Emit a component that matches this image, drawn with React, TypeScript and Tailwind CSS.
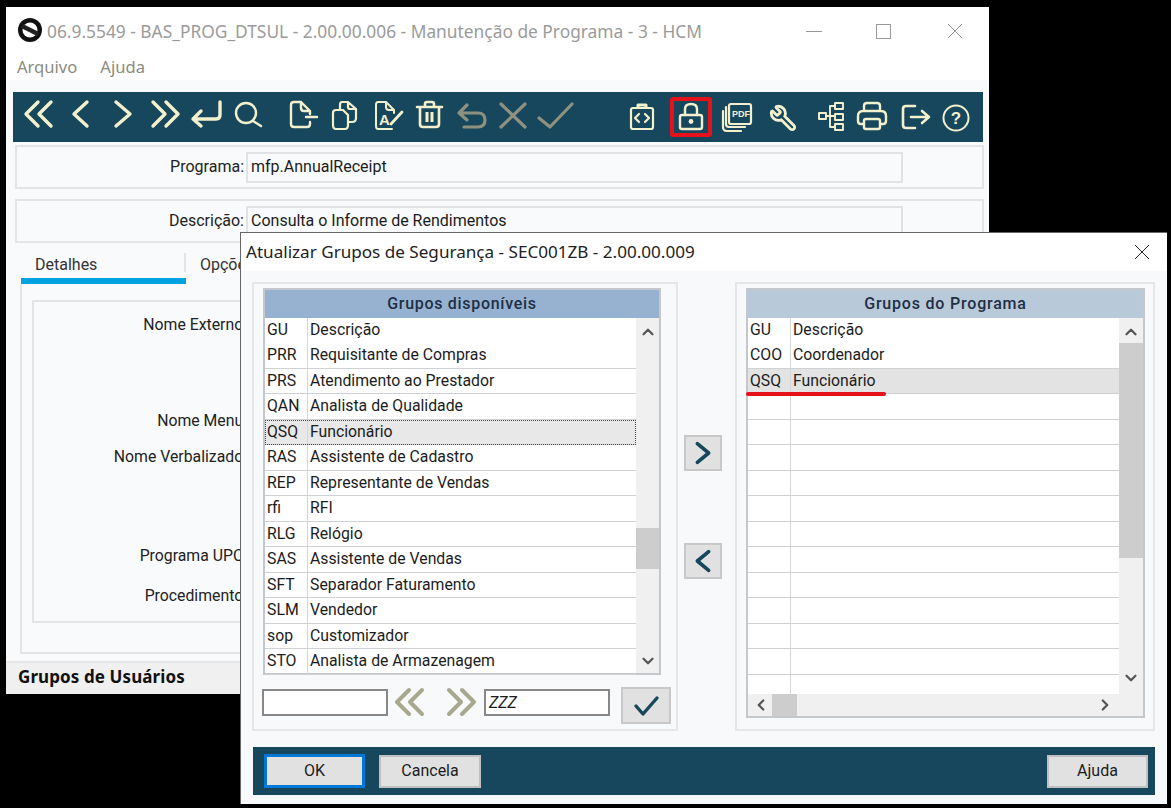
import { ChevronDown, ChevronLeft, ChevronRight, ChevronUp, Wrench } from "lucide-react";
import type { ReactNode } from "react";

const s = { fill: "none", stroke: "currentColor", strokeLinecap: "round", strokeLinejoin: "round" } as const;

function Ico({ w = 2.6, children }: { w?: number; children: ReactNode }) {
  return (
    <svg viewBox="0 0 36 36" width="36" height="36" {...s} strokeWidth={w} className="overflow-visible">
      {children}
    </svg>
  );
}

const tools = [
  { ml: "ml-0", c: "text-[#f3f0cd]", i: <Ico w={3.4}><path d="M17 5L5 17L17 29M30 5L18 17L30 29" /></Ico> },
  { ml: "ml-[6px]", c: "text-[#f3f0cd]", i: <Ico w={3.4}><path d="M24 5L11 17L24 29" /></Ico> },
  { ml: "ml-[5px]", c: "text-[#f3f0cd]", i: <Ico w={3.4}><path d="M12 5L26 17L12 29" /></Ico> },
  { ml: "ml-[7px]", c: "text-[#f3f0cd]", i: <Ico w={3.4}><path d="M6 5L18 17L6 29M19 5L31 17L19 29" /></Ico> },
  { ml: "ml-[5px]", c: "text-[#f3f0cd]", i: <Ico w={3.4}><path d="M32 5V18Q32 22 28 22H5M13 14L5 22L13 29" /></Ico> },
  { ml: "ml-[7px]", c: "text-[#f3f0cd]", i: <Ico w={2.4}><circle cx="15" cy="16" r="10" /><path d="M22 24L30 29" /></Ico> },
  { ml: "ml-[17px]", c: "text-[#f3f0cd]", i: <Ico w={2.4}><path d="M17 5H10Q7 5 7 8V27Q7 30 10 30H23Q26 30 26 27V25M17 5L26 14V17M17 5V11Q17 14 20 14H26M22 20H33" /></Ico> },
  { ml: "ml-[6px]", c: "text-[#f3f0cd]", i: <Ico w={2.2}><path d="M22 5H16Q14 5 14 8V13H10Q7 13 7 16V28Q7 32 10 32H19Q22 32 22 28V25H26Q30 25 30 21V12ZM22 5V10Q22 12 24 12H30M14 13H17L22 18V25" /></Ico> },
  { ml: "ml-[8px]", c: "text-[#f3f0cd]", i: <Ico w={2}><path d="M16 5H8Q6 5 6 8V29Q6 32 8 32H22M16 5L24 13V16M16 5V10Q16 13 19 13H24" /><path d="M21 27L32 15" strokeWidth={2.8} /><text x="9" y="28" fontSize="15" fontWeight="700" fontFamily="Liberation Sans" fill="currentColor" stroke="none">A</text></Ico> },
  { ml: "ml-[5px]", c: "text-[#f3f0cd]", i: <Ico w={2.6}><path d="M6 10H31M14 10V7Q14 5 16 5H21Q23 5 23 7V10M9 10V27Q9 30 12 30H25Q28 30 28 27V10" /><path d="M16 15V25M21 15V25" strokeWidth={3} strokeLinecap="butt" /></Ico> },
  { ml: "ml-[7px]", c: "text-[#8f917f]", i: <Ico w={3.2}><path d="M13 8L5 16L13 23M5 16H24Q31 16 31 23Q31 30 24 30H10" /></Ico> },
  { ml: "ml-[5px]", c: "text-[#8f917f]", i: <Ico w={3.2}><path d="M6 7L30 30M30 7L6 30" /></Ico> },
  { ml: "ml-[6px]", c: "text-[#8f917f]", i: <Ico w={3.2}><path d="M2 21L13 30L35 7" /></Ico> },
  { ml: "ml-[51px]", c: "text-[#f3f0cd]", i: <Ico w={2.2}><rect x="7" y="11" width="22" height="21" rx="2" /><path d="M14 10V8H22V10" strokeWidth={3} /><path d="M15 17L11 21L15 25M21 17L25 21L21 25" /></Ico> },
  { ml: "ml-[13px]", c: "text-[#f3f0cd]", red: true, i: <Ico w={2.4}><rect x="7" y="18" width="22" height="14" rx="2" /><path d="M12 18V12Q12 7 18 7Q24 7 24 12V18" /><circle cx="18" cy="24.5" r="2.4" fill="currentColor" stroke="none" /></Ico> },
  { ml: "ml-[10px]", c: "text-[#f3f0cd]", i: <Ico w={2.2}><rect x="10" y="7" width="22" height="20" rx="2" /><path d="M7 10V27Q7 30 10 30H26M4 14V30Q4 34 8 34H22" /><text x="13" y="20" fontSize="9" fontWeight="700" fontFamily="Liberation Sans" fill="currentColor" stroke="none">PDF</text></Ico> },
  { ml: "ml-[10px]", c: "text-[#f3f0cd]", i: <div className="w-[36px] h-[36px] flex items-center justify-center pt-[6px] -scale-x-100"><Wrench size={28} strokeWidth={2.4} /></div> },
  { ml: "ml-[11px]", c: "text-[#f3f0cd]", i: <Ico w={1.9}><rect x="7" y="16" width="7" height="6" /><rect x="23" y="6" width="8" height="6" /><rect x="23" y="17" width="8" height="6" /><rect x="23" y="27" width="8" height="6" /><path d="M14 19H23M18 9V30M18 9H23M18 30H23" /></Ico> },
  { ml: "ml-[6px]", c: "text-[#f3f0cd]", i: <Ico w={2.4}><path d="M10 14V9Q10 6 13 6H23Q26 6 26 9V14M10 27H7Q4 27 4 24V19Q4 14 9 14H27Q32 14 32 19V24Q32 27 29 27H26" /><rect x="10" y="22" width="16" height="10" rx="2" /></Ico> },
  { ml: "ml-[7px]", c: "text-[#f3f0cd]", i: <Ico w={2.6}><path d="M18 9H9Q6 9 6 12V28Q6 31 9 31H18M14 20H31M25 14L32 20L25 26" /></Ico> },
  { ml: "ml-[5px]", c: "text-[#f3f0cd]", i: <Ico w={2}><circle cx="18" cy="21" r="12.5" /><text x="18" y="27" fontSize="17" fontWeight="700" textAnchor="middle" fontFamily="Liberation Sans" fill="currentColor" stroke="none">?</text></Ico> },
];

const available = [
  ["GU", "Descrição"],
  ["PRR", "Requisitante de Compras"],
  ["PRS", "Atendimento ao Prestador"],
  ["QAN", "Analista de Qualidade"],
  ["QSQ", "Funcionário"],
  ["RAS", "Assistente de Cadastro"],
  ["REP", "Representante de Vendas"],
  ["rfi", "RFI"],
  ["RLG", "Relógio"],
  ["SAS", "Assistente de Vendas"],
  ["SFT", "Separador Faturamento"],
  ["SLM", "Vendedor"],
  ["sop", "Customizador"],
  ["STO", "Analista de Armazenagem"],
];

const selected = [["GU", "Descrição"], ["COO", "Coordenador"], ["QSQ", "Funcionário"], ...Array(12).fill(["", ""])];

function Row({ code, text, first, mark, dotted }: { code: string; text: string; first?: boolean; mark?: boolean; dotted?: boolean }) {
  return (
    <div className={`flex h-[25.5px] shrink-0 items-center text-[15.8px] ${first ? "" : "border-b-[1.5px] border-[#cfd2d4]"} ${mark ? "bg-[#e3e3e3]" : ""} ${dotted ? "bg-[#e8e8e8] outline-1 outline-dotted outline-[#444] -outline-offset-1" : ""}`}>
      <div className="w-[43px] h-full pl-[2px] border-r-[1.5px] border-[#d4d6d8] flex items-center">{code}</div>
      <div className="pl-[2px] whitespace-nowrap">{text}</div>
    </div>
  );
}

function Field({ label, value, top }: { label: string; value: string; top: string }) {
  return (
    <div className={`ml-[9px] w-[969px] h-[44px] ${top} border-2 border-[#e2e4e6] flex items-center shrink-0`}>
      <div className="w-[227px] text-right text-[#222]">{label}</div>
      <div className="ml-[2px] w-[657px] h-[31px] border-2 border-[#e0e2e4] bg-[#f9fafb] pl-[3px] flex items-center">{value}</div>
    </div>
  );
}

const Arrow = ({ d, c = "text-[#17475c]", w = 3.4 }: { d: string; c?: string; w?: number }) => (
  <svg viewBox="0 0 36 36" width="36" height="36" {...s} strokeWidth={w} className={c}><path d={d} /></svg>
);

export default function App() {
  return (
    <div className="relative w-[1171px] h-[808px] bg-black overflow-hidden font-['Roboto',sans-serif] text-[16px] text-[#1c1c1c]">
      {/* janela principal */}
      <div className="absolute left-[6px] top-[7px] w-[983px] h-[687px] bg-[#f9fafb] flex flex-col">
        <div className="bg-white shrink-0">
          <div className="h-[48px] flex items-center pl-[12px] relative font-['Noto_Sans',sans-serif] text-[17.35px] text-[#9b9b9b]">
            <svg viewBox="0 0 24 24" width="24" height="24" className="mr-[5px] -mt-[3px] shrink-0">
              <circle cx="12" cy="12" r="12" fill="#111" />
              <circle cx="12" cy="12" r="7.5" fill="#fff" />
              <path d="M4 8L20 16" stroke="#222" strokeWidth="4.5" />
            </svg>
            <span className="whitespace-nowrap">06.9.5549 - BAS_PROG_DTSUL - 2.00.00.006 - Manutenção de Programa - 3 - HCM</span>
            <div className="ml-auto flex items-center text-[#777]">
              <div className="w-[16px] h-px bg-[#999] mr-[54px]" />
              <div className="w-[15px] h-[15px] border border-[#999] mr-[56px]" />
              <svg viewBox="0 0 16 16" width="16" height="16" className="mr-[26px]" fill="none" stroke="#999"><path d="M1 1L15 15M15 1L1 15" /></svg>
            </div>
          </div>
          <div className="h-[25px] flex items-center pl-[11px] gap-[23px] font-['Noto_Sans',sans-serif] text-[16.6px] text-[#8b8b80]">
            <span>Arquivo</span>
            <span>Ajuda</span>
          </div>
        </div>
        <div className="ml-[7px] mt-[12px] w-[970px] h-[50px] bg-[#17475c] flex items-start pl-[8px] pt-[5px] shrink-0">
          {tools.map((t, i) => (
            <div key={i} className={`relative w-[36px] h-[36px] shrink-0 ${t.ml} ${t.c}`}>
              {t.i}
              {t.red && <div className="absolute -left-[3px] top-0 w-[42px] h-[40px] border-[4px] border-[#e5121c] rounded-[3px]" />}
            </div>
          ))}
        </div>
        <Field label="Programa:" value="mfp.AnnualReceipt" top="mt-[3px]" />
        <Field label="Descrição:" value="Consulta o Informe de Rendimentos" top="mt-[10px]" />
        <div className="ml-[15px] h-[41px] flex items-start shrink-0">
          <div className="w-[165px] h-[41px] border-b-[6px] border-[#00a3e0] pl-[14px] pt-[10px] text-[#333]">Detalhes</div>
          <div className="w-[2px] h-[19px] mt-[10px] bg-[#e2e4e6] -ml-[2px]" />
          <div className="ml-[14px] pt-[10px] text-[#333]">Opções</div>
        </div>
        <div className="ml-[14px] h-[370px] w-[950px] border-2 border-t-0 border-[#e2e4e6] pl-[10px] pt-[16px] shrink-0">
          <div className="h-[323px] border-2 border-[#e2e4e6] pt-[11px] flex flex-col text-[#222] text-[15.8px]">
            <div className="w-[213px] h-[20px] text-right whitespace-nowrap">Nome Externo:</div>
            <div className="w-[213px] h-[20px] mt-[76px] text-right whitespace-nowrap">Nome Menu:</div>
            <div className="w-[213px] h-[20px] mt-[16px] text-right whitespace-nowrap">Nome Verbalizado:</div>
            <div className="w-[213px] h-[20px] mt-[79px] text-right whitespace-nowrap">Programa UPC:</div>
            <div className="w-[213px] h-[20px] mt-[20px] text-right whitespace-nowrap">Procedimento:</div>
          </div>
        </div>
        <div className="mt-[7px] flex-1 bg-[#f0f0f0] border-t-2 border-[#e6e6e6] pl-[12px] pb-[3px] flex items-center font-['Noto_Sans',sans-serif] font-bold text-[17px] tracking-[0.1px] text-[#111]">Grupos de Usuários</div>
      </div>

      {/* dialogo de grupos */}
      <div className="absolute left-[240px] top-[232px] w-[927px] h-[572px] border-l border-t border-[#666] bg-[#f8f9fb] flex flex-col">
        <div className="h-[38px] bg-white flex items-center pl-[5px] font-['Noto_Sans',sans-serif] text-[17.1px] text-[#222] shrink-0">
          <span className="whitespace-nowrap">Atualizar Grupos de Segurança - SEC001ZB - 2.00.00.009</span>
          <svg viewBox="0 0 16 16" width="16" height="16" className="ml-auto mr-[17px]" fill="none" stroke="#222"><path d="M1 1L15 15M15 1L1 15" /></svg>
        </div>
        <div className="flex pl-[11px] pt-[11px] shrink-0">
          {/* painel esquerdo */}
          <div className="w-[426px] h-[449px] border-2 border-[#e4e6e8] shrink-0 pt-[4px] pl-[8px]">
            <div className="ml-[1px] w-[398px] h-[387px] border-2 border-[#c4c8cc] bg-white flex flex-col">
              <div className="h-[27.5px] bg-[#96b2d0] shrink-0 flex items-center justify-center font-medium tracking-[0.7px] text-[#1f2f44]">Grupos disponíveis</div>
              <div className="flex flex-1 min-h-0">
                <div className="w-[371px] shrink-0">
                  {available.map((r, i) => (
                    <Row key={r[0]} code={r[0]} text={r[1]} first={i === 0} dotted={r[0] === "QSQ"} />
                  ))}
                </div>
                <div className="flex-1 bg-[#f0f0f0] flex flex-col items-center text-[#555]">
                  <ChevronUp size={18} strokeWidth={3} className="mt-[5px] shrink-0" />
                  <div className="w-full h-[41px] mt-[187px] bg-[#cdcdcd] shrink-0" />
                  <ChevronDown size={18} strokeWidth={3} className="mt-auto mb-[3px] shrink-0" />
                </div>
              </div>
            </div>
            <div className="flex items-start mt-[12px]">
              <div className="w-[126px] h-[27px] mt-[2px] border-2 border-[#888] bg-white" />
              <div className="ml-[2px] mt-[-2px] w-[40px] flex justify-center"><Arrow d="M17 5L5 17L17 29M30 5L18 17L30 29" c="text-[#a8a88e]" w={4} /></div>
              <div className="ml-[11px] mt-[-2px] w-[40px] flex justify-center"><Arrow d="M6 5L18 17L6 29M19 5L31 17L19 29" c="text-[#a8a88e]" w={4} /></div>
              <div className="ml-[3px] w-[126px] h-[27px] mt-[2px] border-2 border-[#888] bg-white pl-[3px] flex items-center italic">ZZZ</div>
              <div className="ml-[11px] w-[50px] h-[37px] bg-[#e1e1e1] border-2 border-[#c8c8c8] flex items-center justify-center"><Arrow d="M8 18L15 26L29 10" /></div>
            </div>
          </div>
          {/* setas */}
          <div className="w-[57px] pl-[6px] shrink-0">
            <div className="w-[38px] h-[36px] mt-[153px] bg-[#e1e1e1] border-2 border-[#c8c8c8] flex items-center justify-center"><Arrow d="M12 8L24 18L12 28" w={3.8} /></div>
            <div className="w-[38px] h-[36px] mt-[72px] bg-[#e1e1e1] border-2 border-[#c8c8c8] flex items-center justify-center"><Arrow d="M24 8L12 18L24 28" w={3.8} /></div>
          </div>
          {/* painel direito */}
          <div className="w-[420px] h-[449px] border-2 border-[#e4e6e8] shrink-0 pt-[4px] pl-[9px]">
            <div className="w-[399px] h-[430px] border-2 border-[#c4c8cc] bg-white flex flex-col">
              <div className="h-[27.5px] bg-[#b8c9da] shrink-0 flex items-center justify-center font-medium tracking-[0.8px] text-[#1f2f44]">Grupos do Programa</div>
              <div className="flex flex-1 min-h-0">
                <div className="w-[371px] shrink-0 flex flex-col">
                  <div className="h-[376px] overflow-hidden flex flex-col shrink-0">
                    {selected.map((r, i) => (
                      <Row key={i} code={r[0]} text={r[1]} first={i === 0} mark={r[0] === "QSQ"} />
                    ))}
                  </div>
                  <div className="flex-1 bg-[#f0f0f0] flex items-center text-[#555] relative">
                    <ChevronLeft size={18} strokeWidth={3} className="ml-[4px] shrink-0" />
                    <div className="w-[25px] h-full ml-[2px] bg-[#cdcdcd] shrink-0" />
                    <ChevronRight size={18} strokeWidth={3} className="ml-auto mr-[5px] shrink-0" />
                  </div>
                </div>
                <div className="flex-1 bg-[#f0f0f0] flex flex-col items-center text-[#555]">
                  <ChevronUp size={18} strokeWidth={3} className="mt-[5px] shrink-0" />
                  <div className="w-full h-[215px] mt-[2px] bg-[#cdcdcd] shrink-0" />
                  <ChevronDown size={18} strokeWidth={3} className="mt-auto mb-[29px] shrink-0" />
                </div>
              </div>
            </div>
            {/* sublinhado de destaque */}
            <div className="relative">
              <div className="absolute left-0 -top-[326px] w-[140px] h-[4px] rounded-full bg-[#e5121c]" />
            </div>
          </div>
        </div>
        <div className="ml-[12px] mt-[16px] w-[902px] h-[48px] bg-[#17475c] flex items-center pl-[11px] pr-[7px] shrink-0">
          <button className="w-[101px] h-[34px] bg-[#e1e1e1] border-[3px] border-[#0078d7]">OK</button>
          <button className="ml-[14px] w-[102px] h-[33px] bg-[#e1e1e1] border-2 border-[#c0c0c0]">Cancela</button>
          <button className="ml-auto w-[101px] h-[33px] bg-[#e1e1e1] border-2 border-[#c0c0c0]">Ajuda</button>
        </div>
      </div>
    </div>
  );
}
